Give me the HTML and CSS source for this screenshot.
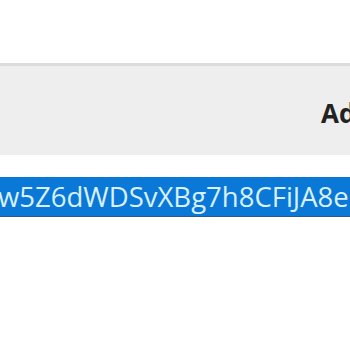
FILE: index.html
```html
<!DOCTYPE html>
<html>
<head>
<meta charset="utf-8">
<link rel="stylesheet" href="styles.css">
</head>
<body>
<div class="page">
  <div class="top"></div>
  <div class="header">
    <span class="hcell">Ad</span>
  </div>
  <div class="row">
    <span class="sel">w5Z6dWDSvXBg7h8CFiJA8e</span>
  </div>
</div>
</body>
</html>
```
FILE: styles.css
```css
html, body {
  margin: 0;
  padding: 0;
  background: #ffffff;
  overflow: hidden;
}
.page {
  width: 350px;
  height: 350px;
  font-family: "Open Sans", "Noto Sans", sans-serif;
  overflow: hidden;
}
.top {
  height: 63px;
}
.header {
  height: 85px;
  background: #eeeeee;
  border-top: 3px solid #dcdcdc;
  display: flex;
  align-items: center;
  padding-left: 321px;
  padding-top: 4px;
  white-space: nowrap;
  width: 380px;
}
.hcell {
  font-size: 26px;
  font-weight: 700;
  color: #222222;
}
.row {
  margin-top: 22px;
  height: 39px;
  background: #0a78d6;
  border-bottom: 1px solid #2a5a8a;
  display: flex;
  align-items: center;
  white-space: nowrap;
  margin-left: -2px;
  width: 360px;
}
.sel {
  font-size: 27.5px;
  color: #d8f0ff;
  letter-spacing: 0;
}
```
